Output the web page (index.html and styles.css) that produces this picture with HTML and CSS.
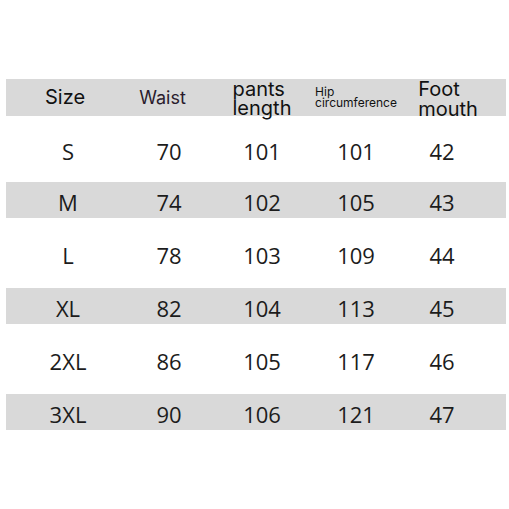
FILE: index.html
```html
<!DOCTYPE html>
<html lang="en">
<head>
<meta charset="utf-8">
<title>Size chart</title>
<link rel="stylesheet" href="styles.css">
</head>
<body>
<div class="chart">
  <div class="row head gray">
    <div class="cell h-size">Size</div>
    <div class="cell h-waist">Waist</div>
    <div class="cell h-pants">pants<br>length</div>
    <div class="cell h-hip">Hip<br>circumference</div>
    <div class="cell h-foot">Foot<br>mouth</div>
  </div>
  <div class="row tall first">
    <div class="cell">S</div><div class="cell">70</div><div class="cell">101</div><div class="cell">101</div><div class="cell">42</div>
  </div>
  <div class="row gray">
    <div class="cell">M</div><div class="cell">74</div><div class="cell">102</div><div class="cell">105</div><div class="cell">43</div>
  </div>
  <div class="row tall">
    <div class="cell">L</div><div class="cell">78</div><div class="cell">103</div><div class="cell">109</div><div class="cell">44</div>
  </div>
  <div class="row gray">
    <div class="cell">XL</div><div class="cell">82</div><div class="cell">104</div><div class="cell">113</div><div class="cell">45</div>
  </div>
  <div class="row tall">
    <div class="cell">2XL</div><div class="cell">86</div><div class="cell">105</div><div class="cell">117</div><div class="cell">46</div>
  </div>
  <div class="row gray">
    <div class="cell">3XL</div><div class="cell">90</div><div class="cell">106</div><div class="cell">121</div><div class="cell">47</div>
  </div>
</div>
</body>
</html>
```

FILE: styles.css
```css
html, body {
  margin: 0;
  padding: 0;
  background: #ffffff;
}

body {
  width: 509px;
  height: 509px;
  overflow: hidden;
}

.chart {
  padding: 79px 3px 0 6px;
  width: 500px;
  font-family: "Open Sans", "DejaVu Sans", sans-serif;
  font-size: 22px;
  color: #1c1c1c;
}

.row {
  display: grid;
  grid-template-columns: 124px 78px 108px 80px 92px 1fr;
  height: 36px;
  align-items: center;
}

.row.tall {
  height: 70px;
}

.row.first {
  height: 66px;
}

.gray {
  background: #d9d9d9;
}

.cell {
  text-align: center;
  line-height: 30px;
  padding-top: 3px;
}

.head {
  height: 37px;
  align-items: start;
  font-family: Inter, "Liberation Sans", sans-serif;
  color: #111111;
}

.head .cell {
  padding-top: 0;
}

.h-size {
  font-size: 20px;
  line-height: 37px;
  margin-left: -6px;
}

.h-waist {
  font-size: 18px;
  line-height: 37px;
  color: #2a1b2c;
  margin-left: -13px;
}

.h-pants {
  font-size: 20px;
  line-height: 19px;
  text-align: left;
  justify-self: center;
}

.head .h-pants {
  padding-top: 1px;
}

.h-hip {
  font-size: 12px;
  line-height: 11px;
  text-align: left;
  justify-self: center;
}

.head .h-hip {
  padding-top: 7px;
}

.h-foot {
  font-size: 20px;
  line-height: 20px;
  text-align: left;
  justify-self: center;
  margin-left: 12px;
}
```
